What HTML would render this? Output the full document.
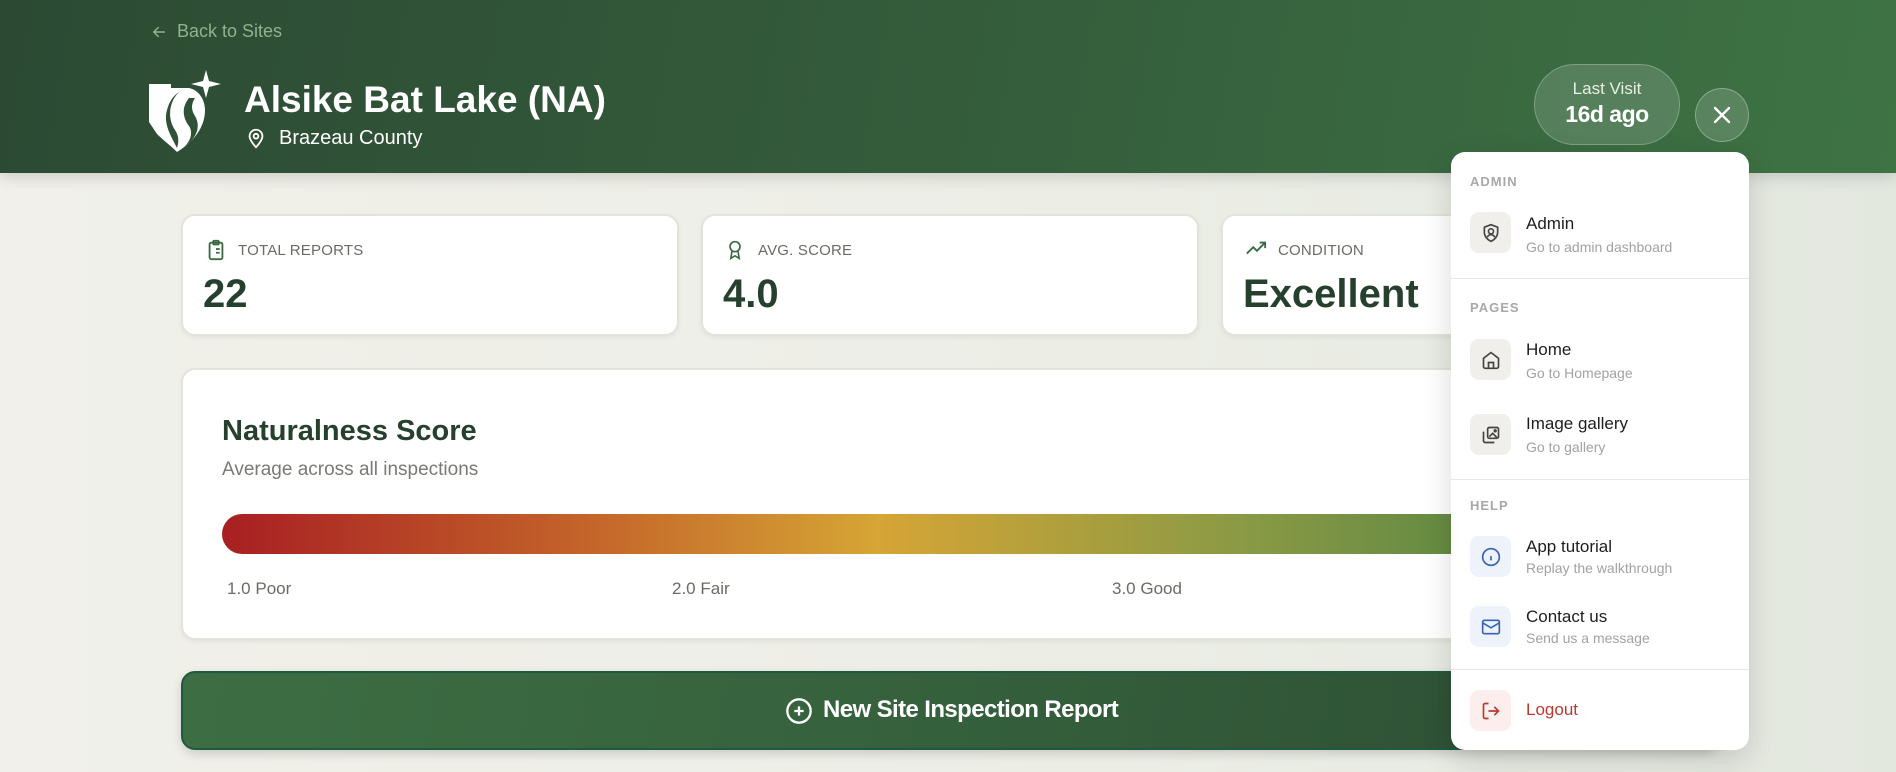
<!DOCTYPE html>
<html><head><meta charset="utf-8"><style>
*{box-sizing:border-box;margin:0;padding:0}
body{width:1896px;height:772px;overflow:hidden;font-family:"Liberation Sans",sans-serif;background:linear-gradient(90deg,#f1f0ea 0%,#eceee6 60%,#e3e8df 100%);position:relative}
.hdr{position:absolute;left:0;top:0;width:1896px;height:173px;background:linear-gradient(100deg,#2c4a33 0%,#345c3b 50%,#3e7344 100%);box-shadow:0 4px 14px rgba(0,0,0,.15)}
.abs{position:absolute}
.card{position:absolute;background:#fff;border-radius:14px;border:2px solid #e3e3dc;box-shadow:0 2px 4px rgba(0,0,0,.05)}
.lbl{font-size:15px;color:#6b6b66;letter-spacing:.2px}
.val{font-size:40px;font-weight:bold;color:#25402c}
.dd{position:absolute;left:1451px;top:152px;width:298px;height:598px;background:#fff;border-radius:14px;box-shadow:0 10px 30px rgba(0,0,0,.15)}
.sec{position:absolute;left:19px;font-size:13px;font-weight:bold;color:#a8a8a8;letter-spacing:1px}
.ib{position:absolute;left:19px;width:41px;height:41px;border-radius:9px;background:#f0efeb;display:flex;align-items:center;justify-content:center}
.t{position:absolute;left:75px;font-size:17px;color:#1e1e1e}
.s{position:absolute;left:75px;font-size:14px;color:#a2a2a2}
.div{position:absolute;left:0;width:298px;height:1px;background:#e8e8e4}
</style></head><body>
<div class="hdr"></div>
<svg class="abs" style="left:150px;top:23px" width="18" height="18" viewBox="0 0 24 24" fill="none" stroke="#8fb38f" stroke-width="2" stroke-linecap="round"><path d="M19 12H5M11 6l-6 6 6 6"/></svg>
<div class="abs" style="left:177px;top:21px;font-size:18px;color:#8fb38f">Back to Sites</div>
<svg class="abs" style="left:149px;top:70px" width="76" height="82" viewBox="0 0 76 82">
<path d="M0 14 L22 14 L22 18 L40 18 C50 20 56 30 56 40 C56 58 44 72 28 82 C22 76 14 70 8 64 L0 52 Z" fill="#fff"/>
<path d="M30 22 C20 32 18 48 26 60 C30 66 30 72 28 78 C22 66 14 54 18 40 C20 32 24 26 30 22 Z" fill="#2f5236"/>
<path d="M40 28 C32 38 34 48 40 56 C44 62 42 70 36 76 C48 68 52 56 46 46 C42 40 42 34 46 28 Z" fill="#2f5236"/>
<path d="M57 0 L60 11 L72 14 L60 17 L57 28 L54 17 L42 14 L54 11 Z" fill="#fff"/>
</svg>
<div class="abs" style="left:244px;top:79px;font-size:37px;font-weight:bold;color:#fff">Alsike Bat Lake (NA)</div>
<svg class="abs" style="left:245px;top:126px" width="22" height="24" viewBox="0 0 24 24" fill="none" stroke="#fff" stroke-width="2"><path d="M12 22s7-7 7-12a7 7 0 0 0-14 0c0 5 7 12 7 12z"/><circle cx="12" cy="10" r="2.6"/></svg>
<div class="abs" style="left:279px;top:127px;font-size:20px;color:#fff">Brazeau County</div>
<div class="abs" style="left:1534px;top:64px;width:146px;height:81px;border-radius:41px;background:rgba(255,255,255,.14);border:1px solid rgba(255,255,255,.25);text-align:center;color:#fff">
<div style="margin-top:14px;font-size:17px;color:#e8f0e4">Last Visit</div>
<div style="font-size:23px;font-weight:bold;margin-top:2px;letter-spacing:-.5px">16d ago</div></div>
<div class="abs" style="left:1695px;top:88px;width:54px;height:54px;border-radius:50%;background:rgba(255,255,255,.15);border:1px solid rgba(255,255,255,.3)"></div>
<svg class="abs" style="left:1708px;top:101px" width="28" height="28" viewBox="0 0 24 24" stroke="#fff" stroke-width="2" stroke-linecap="round"><path d="M6 6l12 12M18 6L6 18"/></svg>

<div class="card" style="left:181px;top:214px;width:498px;height:122px">
<svg class="abs" style="left:22px;top:22px" width="22" height="24" viewBox="0 0 24 24" fill="none" stroke="#3b6b42" stroke-width="2"><rect x="5" y="4" width="14" height="18" rx="2"/><rect x="9" y="2" width="6" height="4" rx="1"/><path d="M9 11h.01M12 11h4M9 15h.01M12 15h4"/></svg>
<div class="abs lbl" style="left:55px;top:26px">TOTAL REPORTS</div>
<div class="abs val" style="left:20px;top:56px">22</div></div>
<div class="card" style="left:701px;top:214px;width:498px;height:122px">
<svg class="abs" style="left:22px;top:22px" width="20" height="24" viewBox="0 0 24 24" fill="none" stroke="#3b6b42" stroke-width="2"><circle cx="12" cy="8" r="6"/><path d="M8.5 13L7 22l5-3 5 3-1.5-9"/></svg>
<div class="abs lbl" style="left:55px;top:26px">AVG. SCORE</div>
<div class="abs val" style="left:20px;top:56px">4.0</div></div>
<div class="card" style="left:1221px;top:214px;width:498px;height:122px">
<svg class="abs" style="left:20px;top:22px" width="26" height="22" viewBox="0 0 24 24" fill="none" stroke="#3b6b42" stroke-width="2"><path d="M2 17l7-7 4 4 9-9M16 5h6v6"/></svg>
<div class="abs lbl" style="left:55px;top:26px">CONDITION</div>
<div class="abs val" style="left:20px;top:56px">Excellent</div></div>

<div class="card" style="left:181px;top:368px;width:1538px;height:272px">
<div class="abs" style="left:39px;top:45px;font-size:29px;font-weight:bold;color:#25402c">Naturalness Score</div>
<div class="abs" style="left:39px;top:89px;font-size:19px;color:#7a7a74">Average across all inspections</div>
<div class="abs" style="left:39px;top:144px;width:1456px;height:40px;border-radius:20px;background:linear-gradient(90deg,#a81f22 0%,#c4642a 25%,#d6a535 45%,#8a9a45 70%,#3e7a3f 100%)"></div>
<div class="abs" style="left:44px;top:209px;font-size:17px;color:#6b6b66">1.0 Poor</div>
<div class="abs" style="left:489px;top:209px;font-size:17px;color:#6b6b66">2.0 Fair</div>
<div class="abs" style="left:929px;top:209px;font-size:17px;color:#6b6b66">3.0 Good</div>
</div>

<div class="abs" style="left:181px;top:671px;width:1538px;height:79px;border-radius:14px;background:linear-gradient(100deg,#3d6e43 0%,#35603c 50%,#2c4c33 100%);border:2px solid #1f5a40;box-shadow:0 4px 10px rgba(0,0,0,.15)"></div>
<svg class="abs" style="left:785px;top:697px" width="28" height="28" viewBox="0 0 24 24" fill="none" stroke="#fff" stroke-width="2"><circle cx="12" cy="12" r="10"/><path d="M12 8v8M8 12h8"/></svg>
<div class="abs" style="left:823px;top:696px;font-size:24px;font-weight:bold;color:#fff;letter-spacing:-.6px">New Site Inspection Report</div>

<div class="dd">
<div class="sec" style="top:22px">ADMIN</div>
<div class="ib" style="top:60px"><svg width="20" height="20" viewBox="0 0 24 24" fill="none" stroke="#444" stroke-width="2"><path d="M12 2l8 3v6c0 5-3.5 9-8 11-4.5-2-8-6-8-11V5z"/><circle cx="12" cy="10" r="3"/><path d="M7.5 17c1-2 2.5-3 4.5-3s3.5 1 4.5 3"/></svg></div>
<div class="t" style="top:62px">Admin</div><div class="s" style="top:87px">Go to admin dashboard</div>
<div class="div" style="top:126px"></div>
<div class="sec" style="top:148px">PAGES</div>
<div class="ib" style="top:187px"><svg width="20" height="20" viewBox="0 0 24 24" fill="none" stroke="#444" stroke-width="2"><path d="M3 10l9-7 9 7v10a2 2 0 0 1-2 2H5a2 2 0 0 1-2-2z"/><path d="M9 22v-7h6v7"/></svg></div>
<div class="t" style="top:188px">Home</div><div class="s" style="top:213px">Go to Homepage</div>
<div class="ib" style="top:262px"><svg width="20" height="20" viewBox="0 0 24 24" fill="none" stroke="#444" stroke-width="2"><rect x="8" y="3" width="13" height="13" rx="2"/><path d="M16 21H5a2 2 0 0 1-2-2V8"/><path d="M10 14l4-4 5 5"/><circle cx="17" cy="7" r="1"/></svg></div>
<div class="t" style="top:262px">Image gallery</div><div class="s" style="top:287px">Go to gallery</div>
<div class="div" style="top:327px"></div>
<div class="sec" style="top:346px">HELP</div>
<div class="ib" style="top:384px;background:#edf2fb"><svg width="20" height="20" viewBox="0 0 24 24" fill="none" stroke="#3a63b8" stroke-width="2"><circle cx="12" cy="12" r="10"/><path d="M12 16v-5M12 8h.01"/></svg></div>
<div class="t" style="top:385px">App tutorial</div><div class="s" style="top:408px">Replay the walkthrough</div>
<div class="ib" style="top:454px;background:#edf2fb"><svg width="20" height="20" viewBox="0 0 24 24" fill="none" stroke="#3a63b8" stroke-width="2"><rect x="2" y="4" width="20" height="16" rx="2"/><path d="M2 7l10 6 10-6"/></svg></div>
<div class="t" style="top:455px">Contact us</div><div class="s" style="top:478px">Send us a message</div>
<div class="div" style="top:517px"></div>
<div class="ib" style="top:538px;background:#fbeeec"><svg width="20" height="20" viewBox="0 0 24 24" fill="none" stroke="#b93a2e" stroke-width="2"><path d="M9 21H5a2 2 0 0 1-2-2V5a2 2 0 0 1 2-2h4M16 17l5-5-5-5M21 12H9"/></svg></div>
<div class="t" style="top:548px;color:#b93a2e">Logout</div>
</div>
</body></html>
